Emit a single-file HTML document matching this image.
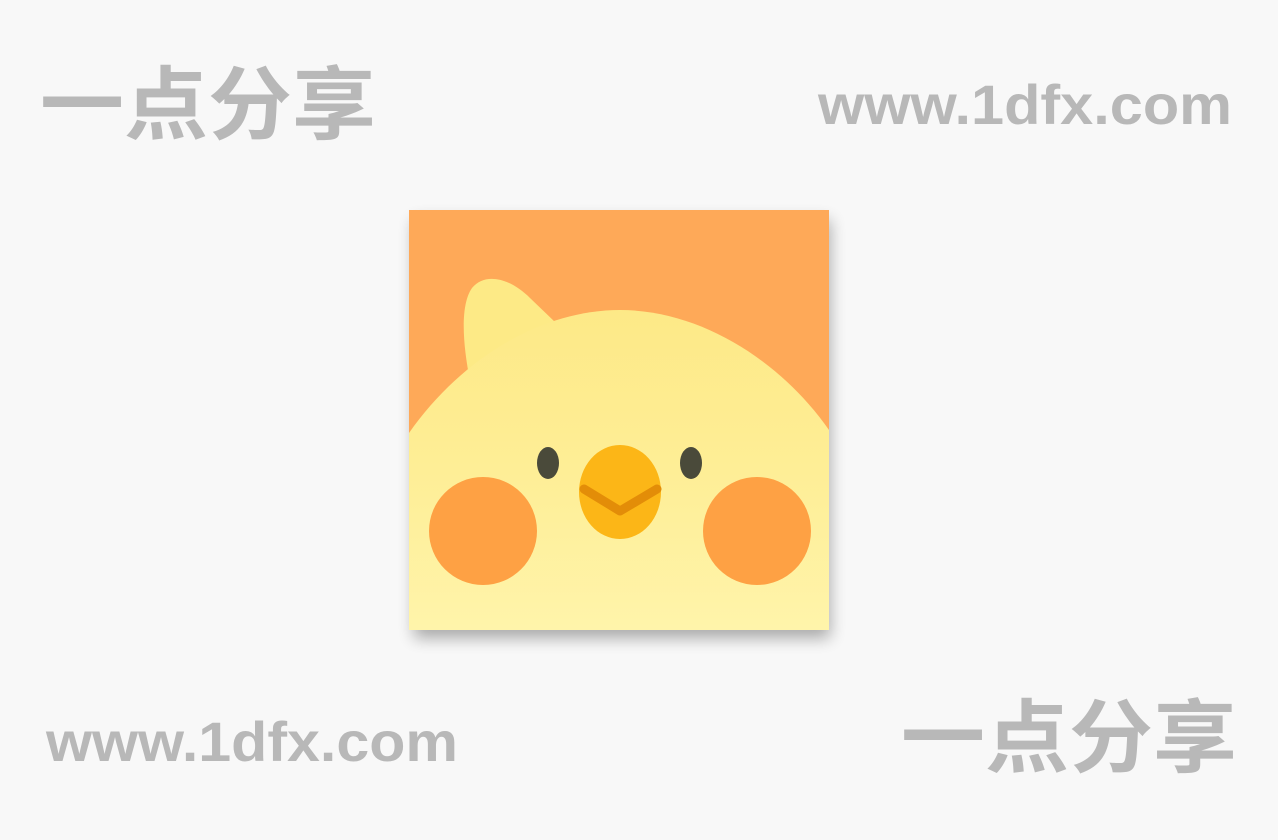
<!DOCTYPE html>
<html><head><meta charset="utf-8"><style>
html,body{margin:0;padding:0;background:#f8f8f8;width:1278px;height:840px;overflow:hidden}
svg{display:block}
</style></head><body>
<svg width="1278" height="840" viewBox="0 0 1278 840" xmlns="http://www.w3.org/2000/svg">
<defs>
<linearGradient id="y" x1="0" y1="0" x2="0" y2="1">
<stop offset="0" stop-color="#fde987"/><stop offset="0.5" stop-color="#feee96"/><stop offset="1" stop-color="#fff4aa"/>
</linearGradient>
<filter id="sh" x="-20%" y="-20%" width="140%" height="140%"><feGaussianBlur stdDeviation="8"/></filter>
<clipPath id="c"><rect x="409" y="210" width="420" height="420"/></clipPath>
</defs>
<rect width="1278" height="840" fill="#f8f8f8"/>
<g fill="#b8b8b8" font-family="'Liberation Sans','Noto Sans CJK SC',sans-serif" font-weight="bold">
<text x="40" y="133" font-size="80" textLength="336" lengthAdjust="spacingAndGlyphs">一点分享</text>
<text x="901" y="766" font-size="80" textLength="336" lengthAdjust="spacingAndGlyphs">一点分享</text>
<text x="818" y="124" font-size="56" textLength="414" lengthAdjust="spacingAndGlyphs">www.1dfx.com</text>
<text x="46" y="761" font-size="56" textLength="412" lengthAdjust="spacingAndGlyphs">www.1dfx.com</text>
</g>
<rect x="414" y="220" width="416" height="418" fill="#000" opacity="0.32" filter="url(#sh)"/>
<g clip-path="url(#c)">
<rect x="409" y="210" width="420" height="420" fill="#fea958"/>
<path d="M472 390 C462 345 460 305 472 288 C485 272 510 278 530 298 L555 322 Z" fill="#fdea86"/>
<path d="M409 433 C460 360 540 310 620 310 C700 310 780 360 829 430 L829 630 L409 630 Z" fill="url(#y)"/>
<ellipse cx="548" cy="463" rx="11" ry="16" fill="#4a4a3a"/>
<ellipse cx="691" cy="463" rx="11" ry="16" fill="#4a4a3a"/>
<circle cx="483" cy="531" r="54" fill="#fea144"/>
<circle cx="757" cy="531" r="54" fill="#fea144"/>
<ellipse cx="620" cy="492" rx="41" ry="47" fill="#fcb617"/>
<path d="M584 489 L620 511 L657 489" fill="none" stroke="#e38d08" stroke-width="9" stroke-linecap="round" stroke-linejoin="round"/>
</g>
</svg>
</body></html>
